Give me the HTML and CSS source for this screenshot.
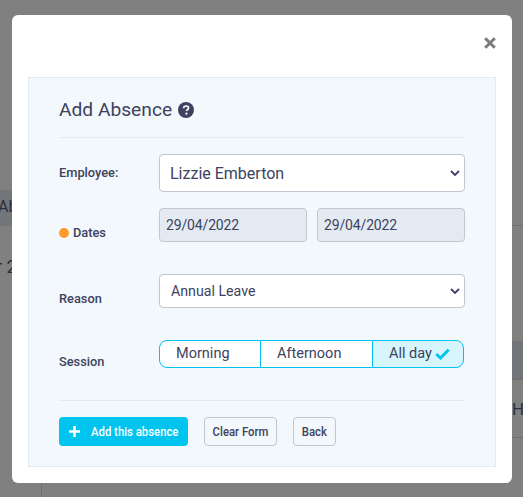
FILE: index.html
```html
<!DOCTYPE html>
<html lang="en">
<head>
<meta charset="utf-8">
<title>Add Absence</title>
<link rel="stylesheet" href="styles.css">
</head>
<body>
<div class="backdrop">
  <div class="bg-band-left"></div>
  <span class="bg-text bg-ab">Ab</span>
  <span class="bg-text bg-two">r 2</span>
  <div class="bg-band-right"></div>
  <span class="bg-text bg-h">H</span>
  <div class="bg-line bg-line-top"></div>
  <div class="bg-line bg-line-bottom"></div>
  <div class="bg-vline"></div>
</div>
<div class="modal">
  <button class="close" type="button" aria-label="Close"><svg viewBox="0 0 12 12" width="12" height="12"><path d="M1.2 1.2 L10.8 10.8 M10.8 1.2 L1.2 10.8" fill="none" stroke="#7b7b7b" stroke-width="3"/></svg></button>
  <div class="panel">
    <h2 class="title">Add Absence <svg class="help" viewBox="0 0 16 16" width="16" height="16"><circle cx="8" cy="8" r="8" fill="#3d4260"/><path d="M5.6 6.2c0-1.4 1.1-2.2 2.5-2.2s2.4.8 2.4 2c0 1.7-2 1.7-2 3" fill="none" stroke="#fff" stroke-width="1.7"/><circle cx="8.4" cy="11.7" r="1.1" fill="#fff"/></svg></h2>
    <div class="row row-employee">
      <label class="label">Employee:</label>
      <div class="select select-big"><span>Lizzie Emberton</span><svg class="chev" viewBox="0 0 10 6" width="10" height="6"><path d="M1 1 L5 5 L9 1" fill="none" stroke="#3d4260" stroke-width="1.8"/></svg></div>
    </div>
    <div class="row row-dates">
      <label class="label label-low"><i class="dot"></i>Dates</label>
      <div class="dates">
        <div class="date">29/04/2022</div>
        <div class="date">29/04/2022</div>
      </div>
    </div>
    <div class="row row-reason">
      <label class="label label-low">Reason</label>
      <div class="select select-mid"><span>Annual Leave</span><svg class="chev" viewBox="0 0 10 6" width="10" height="6"><path d="M1 1 L5 5 L9 1" fill="none" stroke="#3d4260" stroke-width="1.8"/></svg></div>
    </div>
    <div class="row row-session">
      <label class="label label-low">Session</label>
      <div class="segments">
        <div class="seg seg-morning">Morning</div>
        <div class="seg seg-afternoon">Afternoon</div>
        <div class="seg seg-all">All day <svg viewBox="0 0 15 12" width="15" height="12"><path d="M1.3 6 L5.5 10 L13.7 1.8" fill="none" stroke="#00c4ee" stroke-width="3"/></svg></div>
      </div>
    </div>
    <div class="actions">
      <button class="btn btn-primary" type="button"><svg viewBox="0 0 11 11" width="11" height="11"><path d="M5.5 0 V11 M0 5.5 H11" fill="none" stroke="#fff" stroke-width="2.6"/></svg><span>Add this absence</span></button>
      <button class="btn btn-clear" type="button"><span>Clear Form</span></button>
      <button class="btn btn-back" type="button"><span>Back</span></button>
    </div>
  </div>
</div>
</body>
</html>
```
FILE: styles.css
```css
* { box-sizing: border-box; }
html, body { margin: 0; height: 100%; }
body {
  width: 523px; height: 497px; overflow: hidden; position: relative;
  background: #808080; font-family: Roboto, "Liberation Sans", sans-serif; color: #3d4260;
}
.backdrop { position: absolute; inset: 0; }
.bg-band-left { position: absolute; left: 0; top: 190px; width: 12px; height: 36px; background: #72767b; }
.bg-band-right { position: absolute; left: 512px; top: 341px; width: 11px; height: 39px; background: #72767b; border-bottom: 1px solid #6f6f6f; }
.bg-text { position: absolute; line-height: 20px; color: #2d2f3c; }
.bg-ab { left: -2px; top: 197px; font-size: 16px; }
.bg-two { left: -4px; top: 257px; font-size: 18px; }
.bg-h { left: 512px; top: 399px; font-size: 17px; }
.bg-line { position: absolute; left: 512px; width: 11px; height: 1px; background: #6f6f6f; }
.bg-line-top { top: 225px; }
.bg-line-bottom { top: 437px; }
.bg-vline { position: absolute; left: 41px; top: 483px; width: 1px; height: 14px; background: #6f6f6f; }
.modal {
  position: absolute; left: 12px; top: 15px; width: 500px; height: 468px;
  background: #fff; border-radius: 6px; padding: 62px 16px 16px;
}
.close { position: absolute; right: 16px; top: 22px; width: 12px; height: 12px; padding: 0; border: 0; background: none; display: flex; }
.panel {
  height: 390px; background: #f3f8fc; border: 1px solid #e3ecf2; padding: 0 30px;
}
.title {
  margin: 0; box-sizing: content-box; height: 24px; padding: 20px 0 15px;
  font-size: 19.2px; font-weight: 400; line-height: 24px; display: flex; align-items: center; gap: 6px;
  border-bottom: 1px solid #e3eaf0;
}
.row { display: grid; grid-template-columns: 100px 306px; }
.row-employee { margin-top: 16px; height: 38px; align-items: center; }
.row-dates { margin-top: 16px; height: 34px; }
.row-reason { margin-top: 32px; height: 34px; }
.row-session { margin-top: 32px; height: 28px; }
.label { font-size: 12.8px; font-weight: 500; line-height: 16px; display: flex; align-items: center; }
.label-low { align-self: end; position: relative; top: -1px; }
.row-session .label-low { top: 2px; }
.dot { width: 10px; height: 10px; border-radius: 50%; background: #ff9a2b; margin-right: 4px; }
.select {
  background: #fff; border: 1px solid #bfc7d0; border-radius: 4px; display: flex; align-items: center; justify-content: space-between;
}
.select-big { height: 38px; font-size: 16px; padding: 0 4px 0 10px; }
.select-mid { height: 34px; font-size: 14.2px; padding: 0 4px 0 11px; }
.dates { display: grid; grid-template-columns: 148px 148px; gap: 10px; }
.date {
  height: 34px; background: #e4eaf2; border: 1px solid #bfc7d0; border-radius: 4px;
  font-size: 14px; letter-spacing: -.15px; line-height: 32px; padding-left: 6px;
}
.segments { display: grid; grid-template-columns: 102px 112px 91px; height: 28px; width: 305px; font-size: 14.5px; }
.seg { background: #fff; border: 1px solid #00c4ee; border-left: 0; display: flex; align-items: center; line-height: 1; }
.seg-morning { border-left: 1px solid #00c4ee; border-radius: 8px 0 0 8px; padding-left: 16px; }
.seg-afternoon { padding-left: 16px; border-left: 1px solid #00c4ee; margin-left: -1px; }
.seg-all { background: #d6f5fd; border-radius: 0 8px 8px 0; padding-left: 16px; gap: 3px; border-left: 1px solid #00c4ee; margin-left: -1px; }
.actions {
  display: flex; margin-top: 32px; padding-top: 16px; border-top: 1px solid #e3eaf0;
}
.btn { height: 29px; border-radius: 4px; font-family: Roboto, sans-serif; font-size: 12px; font-weight: 500; padding: 0; display: flex; align-items: center; justify-content: center; }
.btn span { display: inline-block; transform: scaleX(.945); white-space: nowrap; }
.btn-primary { width: 129px; background: #00c4ee; border: 0; color: #fff; justify-content: flex-start; padding-left: 10px; }
.btn-primary span { margin-left: 11px; transform-origin: left center; }
.btn-clear, .btn-back { background: #f3f8fc; border: 1px solid #bfc7d0; color: #3d4260; }
.btn-clear { width: 73px; margin-left: 16px; }
.btn-back { width: 43px; margin-left: 16px; }
```
